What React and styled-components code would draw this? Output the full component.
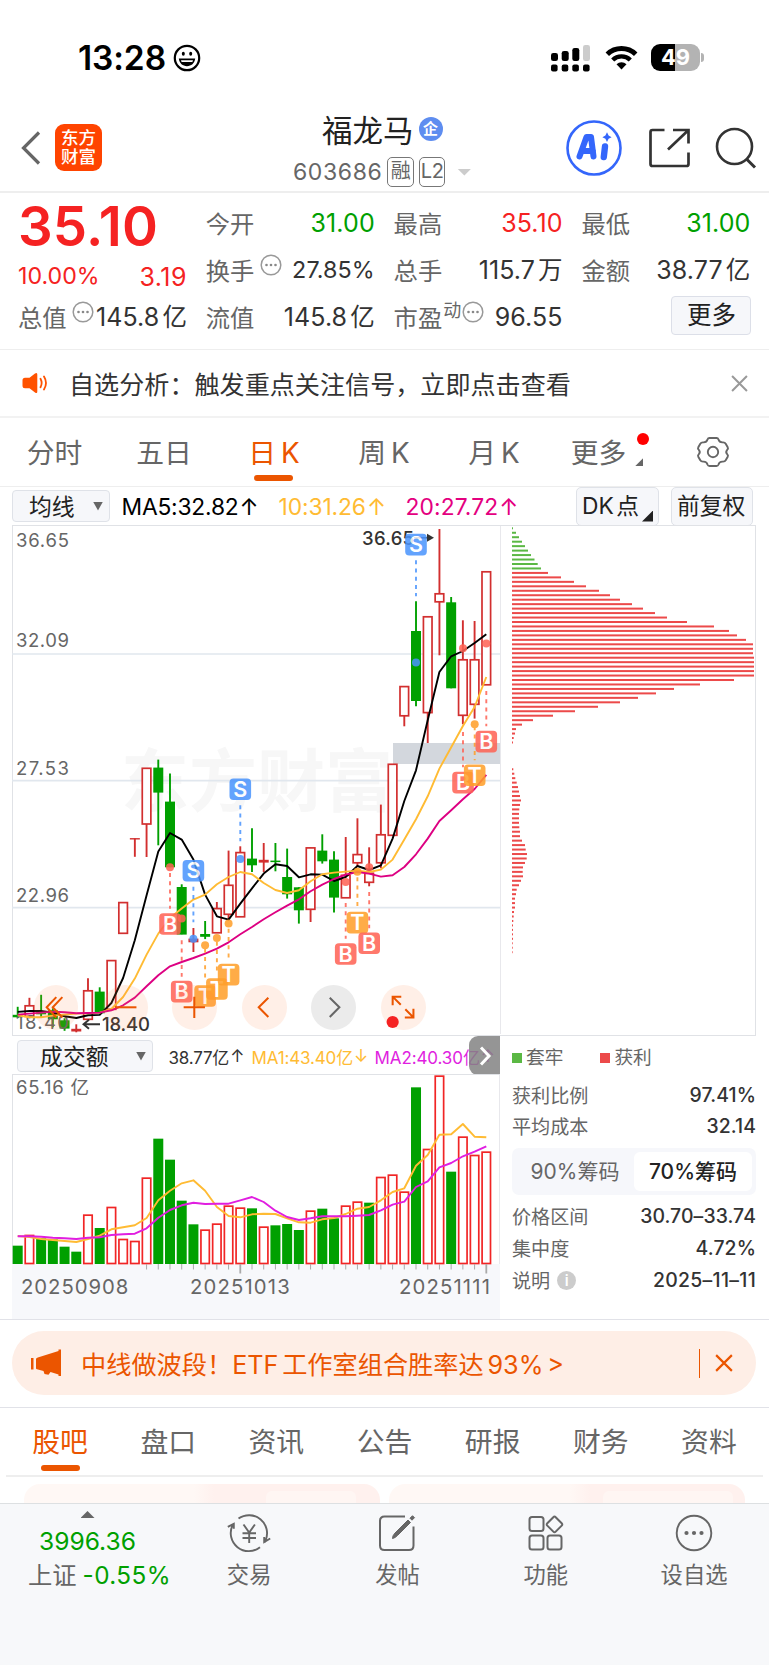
import styled, { createGlobalStyle, css } from "styled-components"

const GREEN = "#00a000"
const RED = "#f52222"
const ORANGE = "#eb5500"

// ---- chart data -------------------------------------------------------

const STEP = 11.715
const xAt = (i) => 17.7 + STEP * i

// [kind, bodyTop, bodyBottom, wickTop, wickBottom]  g: down, r: up, f: thin up
const candles = [
    ["g", 1014.5, 1017, 1006.5, 1017.6],
    ["r", 1005.5, 1016, 997.5, 1018],
    ["g", 1012, 1014, 994.5, 1017],
    ["g", 1010, 1019, 1008, 1027],
    ["g", 1020, 1028.3, 1018, 1030.5],
    ["f", 1028.5, 1031.2, 1024, 1032],
    ["r", 990.5, 1019, 978, 1019],
    ["g", 991.3, 1013, 987, 1013],
    ["r", 960.3, 1009, 960, 1009],
    ["r", 902.3, 933, 902, 933],
    ["f", 837.8, 839.2, 838, 856.5],
    ["r", 768, 823.7, 768, 856.7],
    ["g", 767.3, 792.3, 759.3, 845],
    ["g", 801.3, 867, 773.3, 867],
    ["g", 886.7, 934.3, 884, 934],
    ["f", 938.3, 942, 927.7, 951.7],
    ["g", 933.7, 936.5, 920.7, 938.8],
    ["r", 908.3, 932.5, 901.7, 932],
    ["r", 885, 914, 850.3, 919],
    ["r", 852.3, 916.5, 846, 916],
    ["g", 858.3, 865, 828, 871.7],
    ["f", 859.5, 862.3, 842.7, 871.7],
    ["g", 860.3, 861.8, 842.7, 871],
    ["g", 876.7, 894, 848.3, 898.3],
    ["g", 887, 910, 887, 923.3],
    ["r", 847.6, 909, 847, 921.7],
    ["g", 850.3, 861, 834, 863.3],
    ["g", 859.3, 897.3, 851, 912.3],
    ["r", 875, 897.5, 836.7, 897],
    ["r", 854.3, 862.5, 818, 866],
    ["r", 873, 882, 847, 886],
    ["r", 834.5, 862.5, 804.3, 868],
    ["r", 764, 835, 764, 835],
    ["r", 686.3, 715.5, 686, 726],
    ["g", 630.7, 700.7, 601, 706],
    ["r", 616.5, 712.3, 616, 742.7],
    ["r", 593.5, 601.5, 528.7, 655],
    ["g", 602, 688, 596.7, 688],
    ["r", 659.5, 715, 620, 724],
    ["r", 659.5, 704, 620.7, 718.3],
    ["r", 571.5, 684.5, 571, 684],
]

const ma5 = [1011.6, 1010.7, 1010.7, 1012.3, 1016, 1017.7, 1015, 1014.6, 1002.7, 977.7, 940, 895, 851.3, 832.7, 839.3, 859.3, 894.3, 916, 919.3, 903.3, 888, 873.3, 864, 865.7, 877, 874, 874.3, 880.7, 876.7, 865.7, 869.7, 865, 838.3, 800.7, 770, 720, 671.7, 656, 650.7, 642.7, 634]
const ma10 = [1015, 1017, 1017, 1015.3, 1014.3, 1013.3, 1013, 1012.3, 1008.7, 996.7, 978.3, 954.3, 933.3, 917.7, 908.3, 899.3, 894.3, 884, 876.7, 871.7, 874, 882.7, 889.7, 892.7, 890, 881, 874, 872.3, 871.3, 870.3, 871.7, 869.3, 859.3, 839.3, 819, 796, 768.3, 747, 725.7, 706.7, 676.7]
const ma20 = [1014.3, 1013.3, 1012.3, 1011.3, 1012, 1013, 1012.7, 1012.3, 1010, 1005, 997.3, 986, 975, 966, 961.7, 957.7, 953.3, 948.3, 942, 934, 926.7, 919, 912, 905.3, 899, 891, 884.3, 878.7, 874.3, 871.7, 873.3, 876.3, 875, 866.7, 854, 838.3, 820.7, 810, 799, 788.7, 774.5]

// [letter, x, y, dash start, dash end, dot y]
const signals = [
    ["S", 240.3, 789, 805, 841, 858.7],
    ["S", 193.4, 870.5, 886.5, 922, 938.5],
    ["S", 416, 544.3, 560, 596, 662.3],
    ["B", 170, 923.7, 872.7, 908.5, 867],
    ["B", 181.7, 991.3, 940, 976.5, 918.3],
    ["T", 205.1, 995.7, 948.5, 981, 945],
    ["T", 216.9, 988.7, 941.5, 974, 937.7],
    ["T", 228.6, 974.3, 928.5, 960, 923.3],
    ["B", 345.7, 953.7, 902.7, 938.5, 881.7],
    ["T", 357.4, 922.3, 877, 907, 871.5],
    ["B", 369.2, 943, 891.7, 928, 867],
    ["B", 463, 782.3, 731.7, 767, 648],
    ["T", 474.7, 775, 726, 760, 724],
    ["B", 486.3, 741.3, 690.7, 726, 643.3],
]
const signalColor = { S: "#4a94fd", B: "#ff6354", T: "#ff9f2a" }

const volumes = [
    ["g", 647], ["r", 615], ["g", 625], ["g", 628], ["g", 650], ["g", 665], ["r", 554], ["g", 594], ["r", 531], ["r", 627],
    ["r", 633], ["r", 443], ["g", 326], ["g", 389], ["g", 512], ["g", 583], ["r", 599], ["r", 581], ["r", 527], ["r", 533],
    ["g", 535], ["r", 590], ["g", 586], ["g", 582], ["g", 600], ["r", 542], ["g", 536], ["g", 565], ["r", 527], ["r", 515],
    ["g", 518], ["r", 441], ["r", 434], ["r", 485], ["g", 172], ["r", 357], ["r", 137], ["g", 425], ["r", 320], ["r", 375], ["r", 365],
]
const volMa1 = [618, 621, 627, 630, 633, 636, 627, 617, 598, 592, 586, 564, 511, 482, 460, 451, 482, 531, 558, 562, 553, 551, 552, 565, 577, 578, 568, 564, 552, 536, 531, 511, 486, 475, 407, 375, 314, 313, 282, 320, 322]
const volMa2 = [619, 619, 620, 623, 625, 627, 623, 622, 615, 613, 611, 595, 563, 540, 526, 518, 522, 521, 521, 511, 501, 516, 542, 561, 570, 565, 559, 559, 559, 557, 555, 541, 524, 515, 471, 454, 412, 399, 379, 365, 349]
const volY = (v) => 1030 + v / 3

const trappedChips = [1, 4, 7, 10, 13, 16, 19, 22.5, 25.7, 29]
const profitChips = [36, 49, 62, 74, 87, 98, 108, 120, 131, 143, 155, 175, 202, 217, 225, 234, 241, 241, 241, 243, 243.5, 243.5, 243.5, 242, 222, 188, 162, 144, 126, 108, 86, 63, 41, 21, 10, 4, 3, 1.7, 1]
const lowerChips = [1.3, 2.3, 3.3, 4.7, 6, 7, 8, 9, 8, 7.3, 7, 7, 7, 7.3, 8, 8, 10, 13, 13.7, 15, 14.7, 13, 11, 10.7, 11, 9, 7, 4.7, 4, 3, 3, 3, 2, 1.7, 1.3, 1, 1, 1, 1, 0.7, 0.7, 0.6]
const chips = [
    ...trappedChips.map((w, i) => ({ w, row: i, color: "#5bb844" })),
    ...profitChips.map((w, i) => ({ w, row: i + 10, color: "#ec4a4a" })),
    ...lowerChips.map((w, i) => ({ w, row: i + 54, color: "#ec4a4a" })),
]

const toPoints = (list, fn = (v) => v) => list.map((v, i) => `${xAt(i).toFixed(1)},${fn(v).toFixed(1)}`).join(" ")

// ---- icons ------------------------------------------------------------

const SmileIcon = () => (
    <svg width="28" height="28" viewBox="0 0 28 28">
        <circle cx="14" cy="14" r="12.2" fill="none" stroke="#000" strokeWidth="2.2" />
        <ellipse cx="10.3" cy="9.8" rx="1.5" ry="2" />
        <ellipse cx="17.7" cy="9.8" rx="1.5" ry="2" />
        <path d="M5.8 14.6h16.4c-.6 5-4 7.6-8.2 7.6s-7.6-2.6-8.2-7.6z" />
        <path d="M8 16.3h12l-.6 1.7H8.6z" fill="#fff" />
    </svg>
)

const SignalIcon = () => (
    <svg width="40" height="28" viewBox="0 0 40 28">
        {[0, 10.7, 21.3, 32].map((x, i) => (
            <g key={x}>
                <rect x={x} y={[9, 7, 4, 1][i]} width="7" height={[8, 10, 13, 16][i]} rx="2.3" fill={i === 3 ? "#ccc" : "#000"} />
                <rect x={x} y="20.5" width="6.6" height="7" rx="2" />
            </g>
        ))}
    </svg>
)

const WifiIcon = () => (
    <svg width="33" height="25" viewBox="0 0 33 25">
        <path d="M2.3 9.2a20.5 20.5 0 0 1 28.4 0" fill="none" stroke="#000" strokeWidth="5" />
        <path d="M7.7 15a12.6 12.6 0 0 1 17.6 0" fill="none" stroke="#000" strokeWidth="4.4" />
        <path d="M16.5 24.5l-5-5.2a7.3 7.3 0 0 1 10 0z" />
    </svg>
)

const BackIcon = () => (
    <svg width="22" height="36" viewBox="0 0 22 36">
        <path d="M20 2.5L4.500 18 20 33.500" fill="none" stroke="#666" strokeWidth="3.2" />
    </svg>
)

const AiIcon = () => (
    <svg width="56" height="56" viewBox="0 0 56 56">
        <circle cx="28" cy="28" r="26.5" fill="none" stroke="#3466fb" strokeWidth="2.6" />
        <path d="M13.5 36.5L20.5 17h4.500L27.500 36.500M17 31h10" fill="none" stroke="#3466fb" strokeWidth="6" strokeLinejoin="round" strokeLinecap="round" />
        <path d="M39 26.5l-1.2 10.5" stroke="#3466fb" strokeWidth="6.4" strokeLinecap="round" />
        <path d="M41 12.3l1.6 3.3 3 1.600-3 1.600-1.600 3.200-1.600-3.200-3-1.600 3-1.600z" fill="#3466fb" />
    </svg>
)

const ShareIcon = () => (
    <svg width="42" height="42" viewBox="0 0 42 42" fill="none" stroke="#333" strokeWidth="2.7">
        <path d="M16.5 3H4.5Q2.5 3 2.5 5v32q0 2 2 2h34q2 0 2-2V25.5" />
        <path d="M25 3h15.5v13.5M40 3.5L20 22.5" />
    </svg>
)

const SearchIcon = () => (
    <svg width="42" height="42" viewBox="0 0 42 42" fill="none" stroke="#333" strokeWidth="2.6">
        <circle cx="19.5" cy="19.5" r="17.5" />
        <path d="M31.5 32l8.5 8.5" strokeWidth="3" />
    </svg>
)

const DotsIcon = () => (
    <svg width="22" height="22" viewBox="0 0 22 22">
        <circle cx="11" cy="11" r="9.8" fill="none" stroke="#999" strokeWidth="1.5" />
        {[6.5, 11, 15.5].map((x) => <circle key={x} cx={x} cy="11" r="1.3" fill="#888" />)}
    </svg>
)

const SpeakerIcon = () => (
    <svg width="26" height="22" viewBox="0 0 26 22">
        <path d="M3 5.7h4.5L13 1.6q2.3-1.400 2.300 1v16.800q0 2.400-2.300 1L7.500 16.300H3q-2.500 0-2.500-2.500V8.200q0-2.500 2.500-2.500z" fill="#ff5200" />
        <path d="M18.5 6.8q2.3 4.2 0 8.4M22 4.5q4 6.5 0 13" fill="none" stroke="#ff5200" strokeWidth="1.8" strokeLinecap="round" />
    </svg>
)

const CloseIcon = ({ size, color }) => (
    <svg width={size} height={size} viewBox="0 0 16 16">
        <path d="M1 1l14 14M15 1L1 15" stroke={color} strokeWidth="1.9" />
    </svg>
)

const GearIcon = () => (
    <svg width="34" height="32" viewBox="0 0 34 32" fill="none" stroke="#666" strokeWidth="1.9">
        <path d="M11.500 3.500Q12 2 13.500 2h7q1.500 0 2 1.500.8 2.800 3.800 2.900 2.500-.3 3.400 1.300l2 3.500q.8 1.500-.5 2.600-2 2.200 0 4.400 1.300 1.100.5 2.600l-2 3.500q-.9 1.600-3.400 1.300-3 .1-3.800 2.900-.5 1.500-2 1.500h-7q-1.500 0-2-1.500-.8-2.800-3.800-2.900-2.500.3-3.400-1.300l-2-3.500q-.8-1.500.5-2.600 2-2.200 0-4.400-1.300-1.100-.5-2.600l2-3.500q.9-1.600 3.400-1.300 3-.1 3.800-2.900z" />
        <circle cx="17" cy="16" r="5.2" />
    </svg>
)

const MegaphoneIcon = () => (
    <svg width="31" height="28" viewBox="0 0 31 28" fill={ORANGE}>
        <path d="M0 9h2.500v11.500H0zM6 8.800L27.500 2V.500H30V27h-2.500v-1.500l-8-2.500-2 2.800-4-.8-1-3-6.500-1.700q-1 0-1-1V10q0-1 1.500-1.200z" />
    </svg>
)

const TradeIcon = () => (
    <svg width="44" height="40" viewBox="0 0 44 40" fill="none" stroke="#666" strokeWidth="1.9">
        <path d="M11.500 5.600A18 18 0 0 1 38.500 27.500l-.8 1.800M33 34.200A18 18 0 0 1 5.600 12.200M.8 13.800l6-3v5M43.200 25.500l-6 3.500v-5" />
        <path d="M16.500 11.500l5.700 8 5.700-8M15.500 20.200h13.500M15.500 25h13.500M22.200 19.500v10.500" />
    </svg>
)

const PostIcon = () => (
    <svg width="38" height="38" viewBox="0 0 38 38" fill="none" stroke="#666" strokeWidth="2">
        <path d="M27 2.500H6.500q-4.500 0-4.500 4.500v24.500Q2 36 6.500 36h24.500q4.500 0 4.500-4.500V12.500" />
        <path d="M14.500 24.500q0-3 2.500-5.500L30 6l2.500 2.500L19.500 21.500q-2.500 2.500-5 3z" fill="#666" strokeWidth="1" />
        <path d="M32 4.200l2.500-2.500 2 2-2.500 2.500z" fill="#666" strokeWidth="1" />
    </svg>
)

const FunctionsIcon = () => (
    <svg width="36" height="36" viewBox="0 0 36 36" fill="none" stroke="#666" strokeWidth="2">
        <rect x="1.5" y="2" width="14" height="14" rx="2.5" />
        <rect x="1.5" y="20.5" width="14" height="14" rx="2.5" />
        <rect x="19.5" y="20.5" width="14" height="14" rx="2.5" />
        <path d="M25.300 2.200q1.200-1.200 2.400 0l6 6q1.200 1.200 0 2.400l-6 6q-1.200 1.200-2.400 0l-6-6q-1.200-1.200 0-2.400z" />
    </svg>
)

const MoreIcon = () => (
    <svg width="38" height="38" viewBox="0 0 38 38">
        <circle cx="19" cy="19" r="17.3" fill="none" stroke="#666" strokeWidth="1.9" />
        {[11.5, 19, 26.5].map((x) => <circle key={x} cx={x} cy="19" r="2.1" fill="#666" />)}
    </svg>
)

// ---- charts -----------------------------------------------------------

const PriceChart = () => (
    <PriceSvg viewBox="12 525.7 488 508">
        <Watermark x="121" y="806" textLength="272" fontSize="68">东方财富</Watermark>
        {[653.7, 780.3, 907.3].map((y) => <path key={y} d={`M12 ${y}H500`} stroke="#e1e7ee" strokeWidth="1.6" />)}
        <rect x="393" y="742.7" width="107" height="21" fill="#d3d7dd" />
        {candles.map(([kind, top, bottom, high, low], i) => {
            const x = xAt(i)
            const color = kind === "g" ? GREEN : "#d22f2f"
            return (
                <g key={i} stroke={color} fill={kind === "r" ? "#fff" : color}>
                    <path d={`M${x} ${high}V${low}`} strokeWidth="1.9" />
                    {kind === "r"
                        ? <rect x={x - 4.3} y={top} width="8.6" height={bottom - top} strokeWidth="1.7" />
                        : <rect x={x - 5} y={top} width="10" height={bottom - top} stroke="none" />}
                </g>
            )
        })}
        {[["36.65", 546.5], ["32.09", 647], ["27.53", 774.8], ["22.96", 901.5], ["18.40", 1028.5]].map(([t, y]) => (
            <AxisText key={t} x="16" y={y} textLength="53">{t}</AxisText>
        ))}
        <g fill="none" strokeWidth="1.9" strokeLinejoin="round">
            <polyline points={toPoints(ma5)} stroke="#000" />
            <polyline points={toPoints(ma10)} stroke="#ffbb33" />
            <polyline points={toPoints(ma20)} stroke="#dd0082" />
        </g>
        <PeakText x="362" y="544.3" textLength="52">36.65</PeakText>
        <path d="M414 537.5h14" stroke="#333" strokeWidth="1.5" />
        <path d="M427 533.5l7 4-7 4z" fill="#333" />
        <PeakText x="102" y="1030.7" textLength="48">18.40</PeakText>
        <path d="M100 1024H84M89 1019.5l-5.5 4.5 5.5 4.5" fill="none" stroke="#333" strokeWidth="1.9" />
        {signals.map(([letter, x, y, from, to, dot]) => (
            <g key={x} opacity="0.86">
                <path d={`M${x} ${from}V${to}`} stroke={signalColor[letter]} strokeWidth="1.9" strokeDasharray="4 4.2" />
                <circle cx={x} cy={dot} r="4" fill={signalColor[letter]} />
                <rect x={x - 10.8} y={y - 10.8} width="21.6" height="21.6" rx="4" fill={signalColor[letter]} />
                <SignalText x={x} y={y + 7.7} textAnchor="middle">{letter}</SignalText>
            </g>
        ))}
    </PriceSvg>
)

const ChipChart = () => (
    <ChipSvg viewBox="501 525.7 253.5 508">
        {chips.map(({ w, row, color }) => (
            <rect key={row} x="512" y={527 + row * 4.462} width={w} height="2" fill={color} />
        ))}
    </ChipSvg>
)

const VolumeChart = () => (
    <VolumeSvg viewBox="12 1075 488 189">
        <AxisText x="16" y="1094" textLength="73">65.16 亿</AxisText>
        {volumes.map(([kind, v], i) => kind === "g"
            ? <rect key={i} x={xAt(i) - 5} y={volY(v)} width="10" height={1264 - volY(v)} fill={GREEN} />
            : <rect key={i} x={xAt(i) - 4.2} y={volY(v) + 0.5} width="8.4" height={1263 - volY(v)} fill="#fff" stroke="#f12525" strokeWidth="1.7" />
        )}
        <g fill="none" strokeWidth="1.9" strokeLinejoin="round">
            <polyline points={toPoints(volMa1, volY)} stroke="#ffbb33" />
            <polyline points={toPoints(volMa2, volY)} stroke="#e01ee0" />
        </g>
        {volumes.map((v, i) => i > 10 && (
            <path key={i} d={`M${xAt(i)} 1264V${i === 19 || i === 40 ? 1273.5 : 1269.5}`} stroke="#aaa" strokeWidth={i === 19 || i === 40 ? 1.8 : 1} />
        ))}
    </VolumeSvg>
)

// ---- page -------------------------------------------------------------

const App = () => (
    <>
        <GlobalStyle />
        <Page>
            <StatusBar>
                <Clock>13:28</Clock>
                <SmileIcon />
                <StatusIcons>
                    <SignalIcon />
                    <WifiIcon />
                    <Battery><span>49</span></Battery>
                </StatusIcons>
            </StatusBar>

            <Header>
                <BackIcon />
                <Logo>东方<br />财富</Logo>
                <Title>
                    <StockName>福龙马<Badge>企</Badge></StockName>
                    <StockCode>
                        603686
                        <Tag>融</Tag>
                        <Tag>L2</Tag>
                        <Caret $w={14} $h={7} $color="#ccc" $ml={7} />
                    </StockCode>
                </Title>
                <HeaderIcons>
                    <AiIcon />
                    <ShareIcon />
                    <SearchIcon />
                </HeaderIcons>
            </Header>

            <Quote>
                <QuoteColumn>
                    <Price>35.10</Price>
                    <Change><span>10.00%</span><b>3.19</b></Change>
                    <QuoteRow><Label>总值</Label><Raised $ml={5}><DotsIcon /></Raised><Value>145.8<Unit>亿</Unit></Value></QuoteRow>
                </QuoteColumn>
                <QuoteColumn>
                    <QuoteRow><Label>今开</Label><Value $color={GREEN}>31.00</Value></QuoteRow>
                    <QuoteRow><Label>换手</Label><Raised $ml={6}><DotsIcon /></Raised><Value $size={23.3}>27.85%</Value></QuoteRow>
                    <QuoteRow><Label>流值</Label><Value>145.8<Unit>亿</Unit></Value></QuoteRow>
                </QuoteColumn>
                <QuoteColumn>
                    <QuoteRow><Label>最高</Label><Value $color={RED}>35.10</Value></QuoteRow>
                    <QuoteRow><Label>总手</Label><Value>115.7<Unit>万</Unit></Value></QuoteRow>
                    <QuoteRow><Label>市盈</Label><Raised $ml={3}><small>动</small><DotsIcon /></Raised><Value>96.55</Value></QuoteRow>
                </QuoteColumn>
                <QuoteColumn>
                    <QuoteRow><Label>最低</Label><Value $color={GREEN}>31.00</Value></QuoteRow>
                    <QuoteRow><Label>金额</Label><Value>38.77<Unit>亿</Unit></Value></QuoteRow>
                    <QuoteRow><MoreButton>更多</MoreButton></QuoteRow>
                </QuoteColumn>
            </Quote>

            <Notice>
                <SpeakerIcon />
                <p>自选分析：触发重点关注信号，立即点击查看</p>
                <CloseIcon size="17" color="#999" />
            </Notice>

            <PeriodTabs>
                {["分时", "五日", "日 K", "周 K", "月 K"].map((name, i) => (
                    <Tab key={name} $active={i === 2}>{name}</Tab>
                ))}
                <MoreTab>更多<RedDot /><Corner $size={8} $color="#666" /></MoreTab>
                <GearIcon />
            </PeriodTabs>

            <MaRow>
                <Select $w={98} $h={32}>均线<Caret $w={10} $h={9} $color="#666" /></Select>
                <MaValue $w={157} $ls={-0.2}>MA5:32.82<Arrow>↑</Arrow></MaValue>
                <MaValue $w={127} $ls={-0.1} $color="#ffbb33">10:31.26<Arrow>↑</Arrow></MaValue>
                <MaValue $w={120} $ls={0.1} $color="#e4007f">20:27.72<Arrow>↑</Arrow></MaValue>
                <SmallButtons>
                    <SmallButton $w={83}>DK 点<Corner $size={11} $color="#222" /></SmallButton>
                    <SmallButton $w={82}>前复权</SmallButton>
                </SmallButtons>
            </MaRow>

            <ChartFrame>
                <PriceChart />
                <ChipChart />
                <Controls>
                    <Control><svg viewBox="0 0 44 44"><path d="M28 12L18.500 22l9.500 10M22 12l-9.500 10 9.500 10" /></svg></Control>
                    <Control><svg viewBox="0 0 44 44"><path d="M12 22h21" /></svg></Control>
                    <Control><svg viewBox="0 0 44 44"><path d="M11.500 22h21M22 11.500v21" /></svg></Control>
                    <Control><svg viewBox="0 0 44 44"><path d="M26 12.500L16.500 22l9.500 9.500" /></svg></Control>
                    <Control $muted><svg viewBox="0 0 44 44"><path d="M18.500 12.500L28 22l-9.500 9.500" /></svg></Control>
                    <Control>
                        <svg viewBox="0 0 44 44">
                            <path d="M11.500 20v-8.500H20M11.500 11.500l8 8M32 23.500V32h-8.500M32 32l-8-8" />
                            <circle cx="11.5" cy="36.5" r="6" fill={RED} stroke="none" />
                        </svg>
                    </Control>
                </Controls>
            </ChartFrame>

            <Lower>
                <VolumePane>
                    <VolumeHead>
                        <Select $w={136} $h={32}>成交额<Caret $w={10} $h={9} $color="#666" /></Select>
                        <VolumeValue $w={83} $color="#333" $ls={-0.2}>38.77亿<Arrow>↑</Arrow></VolumeValue>
                        <VolumeValue $w={123} $color="#ffbb33" $ls={-0.15}>MA1:43.40亿<Arrow>↓</Arrow></VolumeValue>
                        <VolumeValue $w={130} $color="#e01ee0" $ls={-0.1}>MA2:40.30亿<Arrow>↑</Arrow></VolumeValue>
                        <NextButton>
                            <svg width="14" height="22" viewBox="0 0 14 22"><path d="M3 2.500l8 8.500-8 8.500" fill="none" stroke="#fff" strokeWidth="3" /></svg>
                        </NextButton>
                    </VolumeHead>
                    <VolumeChart />
                    <Dates>
                        <DateLabel $w={169} $ls={0.95}>20250908</DateLabel>
                        <DateLabel $w={209} $ls={1.15}>20251013</DateLabel>
                        <DateLabel $w={94} $ls={1.15}>20251111</DateLabel>
                    </Dates>
                </VolumePane>
                <ChipPane>
                    <Legend>
                        <LegendItem $color="#5bb844">套牢</LegendItem>
                        <LegendItem $color="#ec4a4a">获利</LegendItem>
                    </Legend>
                    <StatRow><span>获利比例</span><b>97.41%</b></StatRow>
                    <StatRow><span>平均成本</span><b>32.14</b></StatRow>
                    <Toggle>
                        <ToggleItem>90%筹码</ToggleItem>
                        <ToggleItem $active>70%筹码</ToggleItem>
                    </Toggle>
                    <StatRow><span>价格区间</span><b>30.70–33.74</b></StatRow>
                    <StatRow><span>集中度</span><b>4.72%</b></StatRow>
                    <StatRow $gap={1} $wide><span>说明<Info>i</Info></span><b>2025–11–11</b></StatRow>
                </ChipPane>
            </Lower>

            <BannerWrap>
                <Banner>
                    <MegaphoneIcon />
                    <p>中线做波段！ETF 工作室组合胜率达 93% &gt;</p>
                    <BannerLine />
                    <CloseIcon size="18" color={ORANGE} />
                </Banner>
            </BannerWrap>

            <SectionTabs>
                {["股吧", "盘口", "资讯", "公告", "研报", "财务", "资料"].map((name, i) => (
                    <SectionTab key={name} $active={i === 0}>{name}</SectionTab>
                ))}
            </SectionTabs>
            <Cards>
                <Card $shadeFrom={170} $shapeFrom={242} $shapeWidth={90} />
                <Card $shadeFrom={181} $shapeFrom={214} $shapeWidth={130} />
            </Cards>

            <BottomBar>
                <IndexBox>
                    <UpCaret />
                    <IndexValue>3996.36</IndexValue>
                    <IndexChange>上证<span>-0.55%</span></IndexChange>
                </IndexBox>
                <NavItem><TradeIcon />交易</NavItem>
                <NavItem><PostIcon />发帖</NavItem>
                <NavItem><FunctionsIcon />功能</NavItem>
                <NavItem><MoreIcon />设自选</NavItem>
            </BottomBar>
        </Page>
    </>
)

export default App

// ---- styles -----------------------------------------------------------

const GlobalStyle = createGlobalStyle`
* { box-sizing: border-box; }
body {
    margin: 0;
    background: #fff;
    font-family: Inter, "Noto Sans CJK SC", sans-serif;
    color: #333;
}
p { margin: 0; }
svg { display: block; flex: none; }
`
const Page = styled.div`
width: 769px;
height: 1665px;
overflow: hidden;
display: flex;
flex-direction: column;
white-space: nowrap;
& > * { flex: none; }
`
const StatusBar = styled.div`
height: 104px;
padding: 11px 69px 0 78px;
display: flex;
align-items: center;
`
const Clock = styled.span`
width: 95px;
font-size: 33.5px;
font-weight: 600;
color: #000;
letter-spacing: -0.1px;
`
const StatusIcons = styled.div`
margin-left: auto;
display: flex;
align-items: center;
gap: 13.5px;
`
const Battery = styled.div`
position: relative;
width: 49px;
height: 27px;
border-radius: 9px;
background: linear-gradient(90deg, #000 49%, #b3b3b3 49%);
color: #fff;
font-size: 22px;
font-weight: 700;
line-height: 27px;
text-align: center;
&::after {
    content: "";
    position: absolute;
    right: -4px;
    top: 9px;
    width: 3px;
    height: 9px;
    border-radius: 0 4px 4px 0;
    background: #b3b3b3;
}
`
const Header = styled.header`
height: 89px;
padding: 0 12px 0 19px;
border-bottom: 2px solid #eee;
display: flex;
align-items: center;
`
const Logo = styled.div`
width: 47px;
height: 47px;
margin-left: 14px;
border-radius: 9px;
background: #ff4400;
color: #fff;
font-size: 17.5px;
font-weight: 500;
line-height: 19px;
text-align: center;
padding-top: 4px;
`
const Title = styled.div`
width: 190px;
margin-left: 191px;
display: flex;
flex-direction: column;
padding-top: 3px;
`
const StockName = styled.div`
height: 44px;
padding-left: 29px;
display: flex;
align-items: center;
font-size: 30.5px;
color: #222;
`
const Badge = styled.span`
width: 24px;
height: 24px;
margin-left: 5px;
border-radius: 50%;
background: #5e8df0;
color: #fff;
font-size: 15px;
font-weight: 700;
line-height: 23px;
text-align: center;
`
const StockCode = styled.div`
height: 40px;
padding-top: 2px;
display: flex;
align-items: center;
gap: 5px;
font-size: 23px;
letter-spacing: 0.6px;
color: #666;
`
const Tag = styled.span`
width: 26.500px;
height: 30px;
border: 1.5px solid #777;
border-radius: 5px;
font-size: 20px;
line-height: 27px;
letter-spacing: -0.5px;
display: flex;
justify-content: center;
`
const Caret = styled.i`
width: ${(p) => p.$w}px;
height: ${(p) => p.$h}px;
margin-left: ${(p) => p.$ml || 0}px;
background: ${(p) => p.$color};
clip-path: polygon(0 0, 100% 0, 50% 100%);
`
const HeaderIcons = styled.div`
margin-left: auto;
display: flex;
align-items: center;
gap: 25.5px;
`
const Quote = styled.section`
height: 157px;
padding: 6px 18px 0 18px;
border-bottom: 1px solid #eee;
display: grid;
grid-template-columns: repeat(4, 169px);
column-gap: 18.8px;
`
const QuoteColumn = styled.div`
display: flex;
flex-direction: column;
`
const QuoteRow = styled.div`
height: 47px;
display: flex;
align-items: center;
`
const Price = styled.div`
height: 54px;
font-size: 54.5px;
font-weight: 600;
line-height: 55px;
letter-spacing: 0.2px;
color: ${RED};
`
const Change = styled.div`
height: 40px;
padding-top: 6px;
display: flex;
align-items: center;
justify-content: space-between;
font-size: 23.2px;
color: ${RED};
b {
    margin-top: 1px;
    font-size: 25px;
    font-weight: 400;
    letter-spacing: 0.5px;
}
`
const Label = styled.span`
margin-top: -1px;
font-size: 24.3px;
color: #666;
`
const Raised = styled.span`
display: flex;
align-items: center;
margin: -9px 0 0 ${(p) => p.$ml}px;
small {
    font-size: 18px;
    line-height: 22px;
    color: #666;
    margin: -3px 1px 0 -2px;
}
`
const Value = styled.span`
margin-left: auto;
display: flex;
align-items: center;
font-size: ${(p) => p.$size || 25}px;
letter-spacing: 0.1px;
color: ${(p) => p.$color || "#333"};
`
const Unit = styled.span`
margin: -2px 0 0 3px;
font-size: 24.5px;
`
const MoreButton = styled.button`
width: 80px;
height: 39px;
margin: -2px -1px 0 auto;
padding: 0;
border: 1.5px solid #dcdfe8;
border-radius: 4px;
background: #f6f7fa;
font: inherit;
font-size: 24.5px;
line-height: 35px;
color: #222;
`
const Notice = styled.section`
height: 68px;
padding: 0 21px 0 22px;
border-bottom: 2px solid #f2f2f2;
display: flex;
align-items: center;
p {
    margin: -1px 0 0 21px;
    font-size: 25.1px;
}
svg:last-child { margin-left: auto; }
`
const PeriodTabs = styled.nav`
height: 69px;
border-bottom: 1px solid #eee;
display: grid;
grid-template-columns: 109px repeat(5, 110px) 108px;
align-items: center;
justify-items: center;
`
const tabText = css`
position: relative;
height: 100%;
padding-bottom: 3px;
display: flex;
align-items: center;
font-size: 27.8px;
color: ${(p) => (p.$active ? ORANGE : "#666")};
${(p) => p.$active && css`
    &::after {
        content: "";
        position: absolute;
        left: 50%;
        bottom: 5px;
        width: 39px;
        height: 6px;
        margin-left: -19.5px;
        border-radius: 3px;
        background: ${ORANGE};
    }
`}
`
const Tab = styled.span`
${tabText}
word-spacing: -3px;
`
const MoreTab = styled.span`
${tabText}
margin-right: 11px;
`
const RedDot = styled.i`
position: absolute;
right: -23px;
top: 15px;
width: 12px;
height: 12px;
border-radius: 50%;
background: #f00;
`
const Corner = styled.i`
position: absolute;
right: ${(p) => (p.$size > 10 ? 5 : -17)}px;
bottom: ${(p) => (p.$size > 10 ? 3 : 20)}px;
width: ${(p) => p.$size}px;
height: ${(p) => p.$size}px;
background: ${(p) => p.$color};
clip-path: polygon(100% 0, 100% 100%, 0 100%);
`
const MaRow = styled.div`
height: 38px;
padding: 0 16px 0 12px;
display: flex;
align-items: center;
`
const Select = styled.div`
width: ${(p) => p.$w}px;
height: ${(p) => p.$h}px;
flex: none;
padding: 0 6px 2px 0;
border: 1.5px solid #dfe2e8;
border-radius: 4px;
background: #f6f7fa;
display: flex;
align-items: center;
justify-content: flex-end;
gap: ${(p) => (p.$w > 100 ? 27.5 : 18.5)}px;
font-size: 22.8px;
color: #222;
i { margin-top: 2px; }
`
const MaValue = styled.span`
width: ${(p) => p.$w}px;
flex: none;
padding-left: 11.5px;
display: flex;
align-items: center;
font-size: 22.8px;
letter-spacing: ${(p) => p.$ls}px;
color: ${(p) => p.$color || "#000"};
`
const Arrow = styled.span`
margin-left: 1px;
font-family: Inter, sans-serif;
`
const SmallButtons = styled.div`
margin-left: auto;
display: flex;
gap: 12px;
`
const SmallButton = styled.div`
position: relative;
width: ${(p) => p.$w}px;
height: 39px;
padding-left: 5px;
border: 1.5px solid #dfe2e8;
border-radius: 5px;
background: #f6f7fa;
font-size: 22.8px;
line-height: 36px;
word-spacing: -4px;
color: #222;
`
const ChartFrame = styled.section`
position: relative;
width: 744px;
height: 511px;
margin-left: 12px;
border: 1.5px solid #e0e2e6;
display: flex;
`
const PriceSvg = styled.svg`
width: 489px;
height: 508px;
margin-left: -1.5px;
border-right: 1px solid #e8e8ec;
`
const ChipSvg = styled.svg`
width: 253.5px;
height: 508px;
`
const Watermark = styled.text`
font-family: "Noto Sans CJK SC", sans-serif;
font-weight: 700;
fill: #f7f7f7;
`
const AxisText = styled.text`
font-size: 18.5px;
fill: #666;
`
const PeakText = styled.text`
font-size: 18.5px;
font-weight: 500;
fill: #333;
`
const SignalText = styled.text`
font-size: 21.5px;
font-weight: 600;
fill: #fff;
`
const Controls = styled.div`
position: absolute;
left: 20.5px;
bottom: 5px;
display: flex;
gap: 24.9px;
`
const Control = styled.div`
width: 44.6px;
height: 44.6px;
border-radius: 50%;
background: ${(p) => (p.$muted ? "rgba(90, 90, 90, .12)" : "rgba(255, 130, 70, .13)")};
svg {
    width: 100%;
    height: 100%;
    fill: none;
    stroke: ${(p) => (p.$muted ? "#666" : ORANGE)};
    stroke-width: 2;
}
`
const Lower = styled.section`
height: 284px;
padding-left: 12px;
border-bottom: 1.5px solid #e1e2e8;
display: flex;
`
const VolumePane = styled.div`
width: 488px;
display: flex;
flex-direction: column;
`
const VolumeHead = styled.div`
position: relative;
height: 39px;
flex: none;
padding: 2px 0 0 5px;
border-bottom: 1px solid #e0e2e6;
display: flex;
align-items: center;
overflow: hidden;
`
const VolumeValue = styled.span`
width: ${(p) => p.$w}px;
flex: none;
padding-left: 15.5px;
display: flex;
align-items: center;
font-size: 17px;
letter-spacing: ${(p) => p.$ls || 0}px;
color: ${(p) => p.$color};
`
const NextButton = styled.div`
position: absolute;
right: 0;
top: 0;
width: 31px;
height: 39px;
border-radius: 9px 0 0 9px;
background: rgba(130, 130, 130, .85);
display: flex;
align-items: center;
justify-content: center;
`
const VolumeSvg = styled.svg`
width: 488px;
height: 189px;
overflow: visible;
position: relative;
box-shadow: inset 1px 0 #e0e2e6, inset -1px 0 #e8e8ec;
`
const Dates = styled.div`
flex: 1;
padding: 7px 0 0 9px;
background: #f7f8fb;
display: flex;
`
const DateLabel = styled.span`
width: ${(p) => p.$w}px;
font-size: 20.3px;
line-height: 32px;
letter-spacing: ${(p) => p.$ls}px;
color: #666;
`
const ChipPane = styled.div`
width: 256px;
padding-left: 12px;
display: flex;
flex-direction: column;
`
const Legend = styled.div`
height: 43px;
display: flex;
align-items: center;
gap: 37px;
`
const LegendItem = styled.span`
display: flex;
align-items: center;
font-size: 18.7px;
line-height: 24px;
color: #666;
&::before {
    content: "";
    width: 10px;
    height: 10px;
    margin: 0 4px 0 0;
    background: ${(p) => p.$color};
}
`
const StatRow = styled.div`
height: 31.5px;
margin-top: ${(p) => p.$gap || 0}px;
display: flex;
align-items: center;
justify-content: space-between;
font-size: 19.1px;
color: #666;
span {
    display: flex;
    align-items: center;
}
b {
    font-size: 19.4px;
    font-weight: 500;
    letter-spacing: ${(p) => (p.$wide ? 0.3 : 0.1)}px;
    color: #333;
}
`
const Toggle = styled.div`
height: 47px;
margin: 6px 0 5.5px;
padding: 4px;
border-radius: 7px;
background: #f6f7fb;
display: flex;
`
const ToggleItem = styled.div`
flex: 1;
border-radius: 6px;
font-size: 21px;
line-height: 39px;
text-align: center;
font-weight: ${(p) => (p.$active ? 500 : 400)};
background: ${(p) => (p.$active ? "#fff" : "none")};
color: ${(p) => (p.$active ? "#222" : "#666")};
`
const Info = styled.i`
width: 19px;
height: 19px;
margin-left: 7px;
border-radius: 50%;
background: #ccc;
color: #fff;
font-size: 15px;
font-style: normal;
font-weight: 600;
line-height: 19px;
text-align: center;
`
const BannerWrap = styled.section`
height: 88px;
padding: 11px 13px 0 12px;
border-bottom: 1.5px solid #e1e2e8;
`
const Banner = styled.div`
height: 64px;
padding: 0 23px 0 19px;
border-radius: 32px;
background: #feeee6;
display: flex;
align-items: center;
font-size: 25.2px;
color: ${ORANGE};
p {
    margin: -1px 0 0 19px;
    word-spacing: -3.3px;
}
`
const BannerLine = styled.i`
width: 1.5px;
height: 29px;
margin: 0 15px 0 auto;
background: ${ORANGE};
`
const SectionTabs = styled.nav`
height: 69px;
margin: 0 6px 0 6px;
border-bottom: 2px solid #eee;
display: grid;
grid-template-columns: repeat(7, 1fr);
justify-items: center;
`
const SectionTab = styled.span`
${tabText}
padding-bottom: 4px;
&::after { bottom: 4px; }
`
const Cards = styled.div`
height: 26px;
padding: 7px 24px 0;
display: flex;
gap: 9px;
overflow: hidden;
`
const Card = styled.div`
position: relative;
flex: 1;
border-radius: 16px 16px 0 0;
overflow: hidden;
background: linear-gradient(90deg, #fff8f5 ${(p) => p.$shadeFrom}px, #fff1ee ${(p) => p.$shadeFrom + 20}px);
&::after {
    content: "";
    position: absolute;
    left: ${(p) => p.$shapeFrom}px;
    top: 7px;
    width: ${(p) => p.$shapeWidth}px;
    height: 20px;
    border-radius: 6px 6px 0 0;
    background: #fff6f3;
}
`
const BottomBar = styled.footer`
height: 162px;
border-top: 1.5px solid #dde0e2;
background: #f7f8fa;
display: flex;
`
const IndexBox = styled.div`
width: 175px;
padding-top: 7px;
display: flex;
flex-direction: column;
align-items: center;
`
const UpCaret = styled.i`
width: 14px;
height: 7px;
background: #666;
clip-path: polygon(50% 0, 100% 100%, 0 100%);
`
const IndexValue = styled.div`
margin-top: 4px;
font-size: 24.6px;
line-height: 38px;
color: ${GREEN};
`
const IndexChange = styled.div`
align-self: flex-start;
margin: 1px 0 0 28px;
display: flex;
font-size: 24.3px;
line-height: 28px;
color: #666;
span {
    margin-left: 6px;
    letter-spacing: 0.4px;
    color: ${GREEN};
}
`
const NavItem = styled.div`
width: 148.3px;
display: flex;
flex-direction: column;
align-items: center;
font-size: 22.3px;
line-height: 34px;
color: #666;
svg {
    height: 40px;
    margin: 9px 0 5px;
}
`
